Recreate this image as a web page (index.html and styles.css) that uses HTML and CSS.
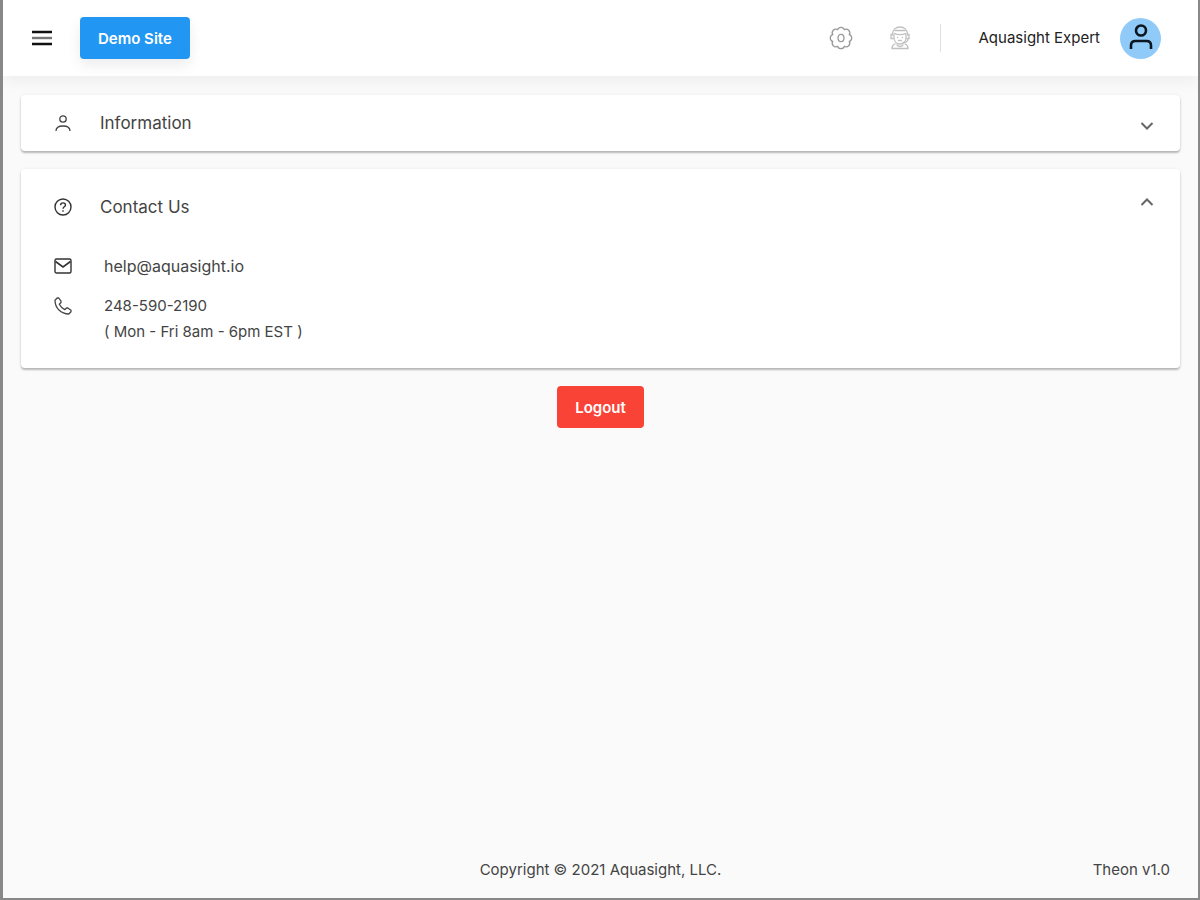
FILE: index.html
```html
<!DOCTYPE html>
<html lang="en">
<head>
    <meta charset="UTF-8">
    <meta name="viewport" content="width=device-width, initial-scale=1.0">
    <title>Theon | Profile</title>
    <link rel="stylesheet" href="styles.css">
</head>
<body>
    <header class="topbar">
        <button class="icon-btn menu-btn" type="button" aria-label="Menu">
            <svg width="20" height="16" viewBox="0 0 20 16">
                <path d="M0 2h20M0 14h20" stroke="#111" stroke-width="2.4"/>
                <path d="M0 8h20" stroke="#777" stroke-width="2.4"/>
            </svg>
        </button>
        <button class="btn btn-site" type="button">Demo Site</button>

        <div class="topbar-right">
            <button class="icon-btn" type="button" aria-label="Settings">
                <svg width="24" height="24" viewBox="0 0 24 24" fill="none" stroke="#999" stroke-width="1.3" stroke-linejoin="round">
                    <path d="M8.600 3.700A3.600 3.600 0 0 1 15.400 3.700A3.600 3.600 0 0 1 20.300 8.600A3.600 3.600 0 0 1 20.300 15.400A3.600 3.600 0 0 1 15.400 20.300A3.600 3.600 0 0 1 8.600 20.300A3.600 3.600 0 0 1 3.700 15.400A3.600 3.600 0 0 1 3.700 8.600A3.600 3.600 0 0 1 8.600 3.700z"/>
                    <ellipse cx="12" cy="12" rx="3" ry="3.600"/>
                </svg>
            </button>
            <button class="icon-btn" type="button" aria-label="Support">
                <svg width="24" height="24" viewBox="0 0 24 24" fill="none" stroke="#c0c0c0" stroke-width="1.3" stroke-linecap="round">
                    <path d="M4.500 9C4.500 4 7.500 1 12 1s7.500 3 7.500 8"/>
                    <path d="M6.500 7.500c2.500 1.500 8.500 1.500 11 0M7 4.500h10"/>
                    <path d="M6 8.500v3c0 4 2.500 6.500 6 6.500s6-2.500 6-6.500v-3"/>
                    <path d="M4.500 8.500H3v4h2M19.500 8.500H21v4h-2M20 13c0 2.500-2 3.500-5 3.500"/>
                    <path d="M9.500 11.500h.2M14.300 11.500h.2M10.500 14.500h3"/>
                    <path d="M7 18c-2 .6-3 1.800-3 4.500h16c0-2.700-1-3.900-3-4.500M9 19c1.500 2 4.500 2 6 0"/>
                </svg>
            </button>
            <span class="divider"></span>
            <span class="user-name">Aquasight Expert</span>
            <button class="icon-btn avatar" type="button" aria-label="Profile">
                <svg width="24" height="28" viewBox="0 0 24 28" fill="none" stroke="#0b1620" stroke-width="2.6">
                    <circle cx="12" cy="6.500" r="5"/>
                    <path d="M2 25v-3.500c0-3 2-4.500 4.500-4.500h11c2.500 0 4.500 1.500 4.500 4.500V25"/>
                </svg>
            </button>
        </div>
    </header>

    <main class="content">
        <details class="card">
            <summary class="card-head">
                <svg class="row-icon" width="18" height="18" viewBox="0 0 18 18" fill="none" stroke="#444" stroke-width="1.3">
                    <circle cx="9" cy="5" r="3.200"/>
                    <path d="M2 17c0-3.600 3-5 7-5s7 1.400 7 5"/>
                </svg>
                <span class="card-title">Information</span>
                <svg class="chevron" width="14" height="8" viewBox="0 0 14 8" fill="none" stroke="#666" stroke-width="2"><path d="M1.500 1L7 6.500 12.500 1"/></svg>
            </summary>
            <p class="card-note">Aquasight Expert</p>
        </details>

        <details class="card card-contact" open>
            <summary class="card-head">
                <svg class="row-icon" width="18" height="18" viewBox="0 0 18 18" fill="none" stroke="#333" stroke-width="1.4">
                    <circle cx="9" cy="9" r="8"/>
                    <path d="M6.600 7.200c0-3.200 4.900-3 4.900-.2C11.500 8.800 9 8.800 9 10.800M9 12.200v1.500"/>
                </svg>
                <span class="card-title">Contact Us</span>
                <svg class="chevron" width="14" height="8" viewBox="0 0 14 8" fill="none" stroke="#666" stroke-width="2"><path d="M1.500 1L7 6.500 12.500 1"/></svg>
            </summary>
            <div class="contact-list">
                <div class="contact-row">
                    <svg class="row-icon" width="18" height="18" viewBox="0 0 18 18" fill="none" stroke="#333" stroke-width="1.4">
                        <rect x="1" y="2" width="16" height="14" rx="1.500"/>
                        <path d="M1.500 4.500L9 10l7.500-5.500" stroke-width="1.6"/>
                    </svg>
                    <a class="email" href="mailto:help@aquasight.io">help@aquasight.io</a>
                </div>
                <div class="contact-row">
                    <svg class="row-icon" width="18" height="18" viewBox="0 0 18 18" fill="none" stroke="#444" stroke-width="1.3" stroke-linejoin="round">
                        <path d="M3.200 1L1 3.200C1 11 7 17 14.800 17l2.200-2.200v-1.600l-3.200-2.200h-1.300l-1.700 1.700C8.500 11.500 6.500 9.500 5.300 7.200L7 5.500V4.200L4.800 1z"/>
                    </svg>
                    <div class="phone">
                        <a href="tel:248-590-2190">248-590-2190</a>
                        <span class="hours">( Mon - Fri 8am - 6pm EST )</span>
                    </div>
                </div>
            </div>
        </details>

        <button class="btn btn-logout" type="button">Logout</button>
    </main>

    <footer class="footer">
        <span class="copyright">Copyright © 2021 Aquasight, LLC.</span>
        <span class="version">Theon v1.0</span>
    </footer>
</body>
</html>
```
FILE: styles.css
```css
:root {
    --primary-color: #2196f3;
    --danger-color: #f94336;
    --avatar-color: #90caf9;
    --background-color: #fafafa;
    --text-color: #444444;
    --frame-color: #888888;
    --border-radius: 4px;
}

* {
    box-sizing: border-box;
}

body {
    display: flex;
    flex-direction: column;
    min-height: 100vh;
    margin: 0;
    border: solid var(--frame-color);
    border-width: 0 2px 2px 3px;
    background-color: var(--background-color);
    color: var(--text-color);
    font-family: Inter, "Liberation Sans", sans-serif;
    font-size: 15px;
    line-height: 26px;
}

a {
    color: inherit;
    text-decoration: none;
}

/* Top bar */
.topbar {
    display: flex;
    align-items: center;
    height: 76px;
    padding: 0 37px 0 29px;
    background-color: #ffffff;
    box-shadow: 0 4px 16px rgba(0, 0, 0, 0.06);
}

.topbar-right {
    display: flex;
    align-items: center;
    margin-left: auto;
}

.icon-btn {
    display: flex;
    align-items: center;
    justify-content: center;
    padding: 0;
    border: none;
    background: none;
    cursor: pointer;
}

.topbar-right .icon-btn + .icon-btn {
    margin-left: 35px;
}

.menu-btn {
    margin-right: 28px;
}

.divider {
    width: 1px;
    height: 28px;
    margin: 0 38px 0 28px;
    background-color: #e0e0e0;
}

.user-name {
    color: #222222;
}

.avatar {
    width: 41px;
    height: 41px;
    margin-left: 20px;
    border-radius: 50%;
    background-color: var(--avatar-color);
}

.btn {
    height: 42px;
    padding: 0 18px;
    border: none;
    border-radius: var(--border-radius);
    color: #ffffff;
    font-family: inherit;
    font-size: 15px;
    font-weight: 600;
    cursor: pointer;
}

.btn-site {
    background-color: var(--primary-color);
    box-shadow: 0 6px 14px rgba(0, 0, 0, 0.08);
}

.btn-logout {
    align-self: center;
    background-color: var(--danger-color);
}

/* Cards */
.content {
    display: flex;
    flex: 1;
    flex-direction: column;
    gap: 18px;
    padding: 19px 18px;
}

.card {
    border-radius: var(--border-radius);
    background-color: #ffffff;
    box-shadow: 0 2px 2px rgba(0, 0, 0, 0.25), 0 0 4px rgba(0, 0, 0, 0.06);
}

.card-head {
    display: flex;
    align-items: center;
    padding: 15px 26px 15px 33px;
    list-style: none;
    cursor: pointer;
}

.card-head::-webkit-details-marker {
    display: none;
}

.card-title {
    flex: 1;
    font-size: 17px;
}

.row-icon {
    flex: none;
    margin-right: 28px;
}

.chevron {
    margin-top: 6px;
}

.card[open] .chevron {
    margin-top: 0;
    margin-bottom: 10px;
    transform: rotate(180deg);
}

.card-contact .card-head {
    padding-top: 25px;
}

.card-note {
    margin: 0;
    padding: 0 33px 20px 79px;
}

.contact-list {
    display: flex;
    flex-direction: column;
    gap: 14px;
    padding: 18px 33px 23px;
}

.contact-row {
    display: flex;
    align-items: flex-start;
}

.contact-row .row-icon {
    margin-top: 4px;
    margin-right: 32px;
}

.email {
    font-size: 16px;
}

.phone {
    display: flex;
    flex-direction: column;
}

/* Footer */
.footer {
    display: grid;
    grid-template-columns: 1fr auto 1fr;
    padding: 0 28px 15px;
}

.copyright {
    grid-column: 2;
}

.version {
    justify-self: end;
}
```
